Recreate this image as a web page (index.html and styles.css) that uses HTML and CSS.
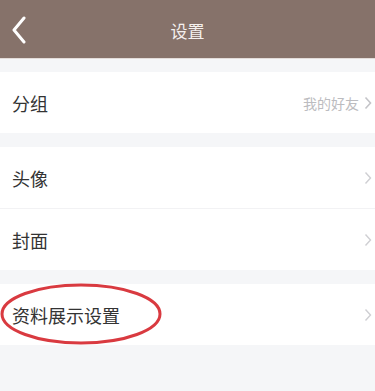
FILE: index.html
```html
<!DOCTYPE html>
<html lang="zh">
<head>
<meta charset="utf-8">
<link rel="stylesheet" href="styles.css">
</head>
<body>
<header class="nav">
  <svg class="back" width="16" height="28" viewBox="0 0 16 28"><path d="M13 2 L3 14 L13 26" fill="none" stroke="#fff" stroke-width="3" stroke-linecap="round" stroke-linejoin="round"/></svg>
  <div class="title">设置</div>
</header>
<section class="group first">
  <div class="row">
    <span class="label">分组</span>
    <span class="value">我的好友</span>
    <svg class="chev" width="8" height="14" viewBox="0 0 8 14"><path d="M1.5 1.5 L6.5 7 L1.5 12.5" fill="none" stroke="#c4c4c8" stroke-width="1.6"/></svg>
  </div>
</section>
<section class="group">
  <div class="row">
    <span class="label">头像</span>
    <svg class="chev" width="8" height="14" viewBox="0 0 8 14"><path d="M1.5 1.5 L6.5 7 L1.5 12.5" fill="none" stroke="#cfcfd3" stroke-width="1.4"/></svg>
  </div>
  <div class="row divided">
    <span class="label">封面</span>
    <svg class="chev" width="8" height="14" viewBox="0 0 8 14"><path d="M1.5 1.5 L6.5 7 L1.5 12.5" fill="none" stroke="#cfcfd3" stroke-width="1.4"/></svg>
  </div>
</section>
<section class="group">
  <div class="row">
    <span class="label">资料展示设置</span>
    <svg class="chev" width="8" height="14" viewBox="0 0 8 14"><path d="M1.5 1.5 L6.5 7 L1.5 12.5" fill="none" stroke="#cfcfd3" stroke-width="1.4"/></svg>
    <svg class="circle" width="166" height="66" viewBox="0 0 166 66"><ellipse cx="82" cy="32" rx="79" ry="29" fill="none" stroke="#d93a40" stroke-width="3"/></svg>
  </div>
</section>
</body>
</html>
```
FILE: styles.css
```css
html, body {
  margin: 0;
  padding: 0;
  background: #f5f6f8;
  font-family: "Noto Sans CJK SC", "Noto Sans", sans-serif;
}
.nav {
  height: 58px;
  background: #86726a;
  border-bottom: 1px solid #e3dcd9;
  display: flex;
  align-items: center;
  justify-content: center;
  position: relative;
}
.back {
  position: absolute;
  left: 11px;
  top: 16px;
}
.title {
  color: #f4f0ee;
  font-size: 17px;
  line-height: 1;
  margin-top: 2px;
}
.group {
  background: #fff;
  margin-top: 14px;
}
.group.first {
  margin-top: 13px;
}
.row {
  height: 61px;
  display: flex;
  align-items: center;
  padding: 0 3px 0 12px;
  position: relative;
}
.row.divided {
  border-top: 1px solid #f2f2f4;
}
.label {
  font-size: 18px;
  color: #333;
  flex: 1;
  line-height: 1;
}
.value {
  font-size: 14px;
  color: #bcbcc0;
  margin-right: 5px;
  line-height: 1;
}
.chev {
  display: block;
}
.circle {
  position: absolute;
  left: -1px;
  top: -2px;
}
```
